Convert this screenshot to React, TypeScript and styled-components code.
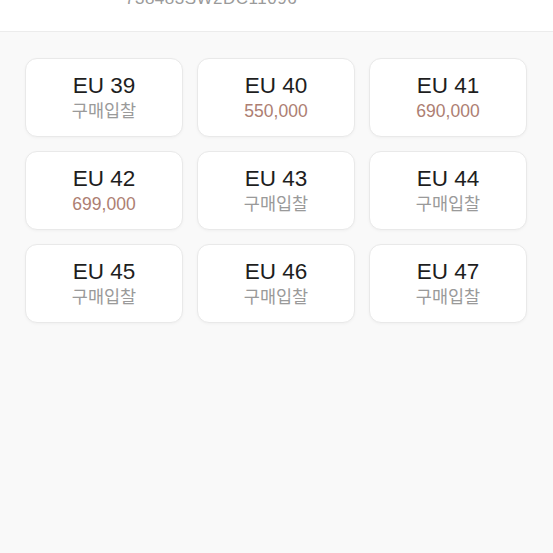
import styled, { createGlobalStyle } from "styled-components";

const GlobalStyle = createGlobalStyle`
  html, body {
    margin: 0;
    padding: 0;
    background: #f9f9f9;
    font-family: "Liberation Sans", "Noto Sans CJK KR", sans-serif;
  }
`;

const Page = styled.div`
  width: 553px;
  min-height: 553px;
  background: #f9f9f9;
`;

const Header = styled.div`
  height: 31px;
  background: #ffffff;
  border-bottom: 1px solid #ececec;
  overflow: hidden;
  padding-left: 125px;
`;

const StyleCode = styled.div`
  margin-top: -11px;
  font-size: 17px;
  line-height: 20px;
  color: #9a9a9a;
  letter-spacing: 0.5px;
`;

const Grid = styled.div`
  display: grid;
  grid-template-columns: repeat(3, 158px);
  gap: 14px;
  padding: 26px 26px 0 25px;
`;

const Card = styled.div`
  height: 77px;
  background: #ffffff;
  border: 1px solid #e9e9e9;
  border-radius: 12px;
  box-shadow: 0 1px 3px rgba(0, 0, 0, 0.04);
  display: flex;
  flex-direction: column;
  align-items: center;
  justify-content: center;
  gap: 3px;
`;

const Size = styled.div`
  font-size: 22.5px;
  line-height: 25px;
  color: #1e1e1e;
`;

const Sub = styled.div<{ $price?: boolean }>`
  font-size: 17.5px;
  line-height: 21px;
  color: ${({ $price }) => ($price ? "#ad7e72" : "#9a9a9a")};
`;

const sizes: { size: string; price?: string }[] = [
  { size: "EU 39" },
  { size: "EU 40", price: "550,000" },
  { size: "EU 41", price: "690,000" },
  { size: "EU 42", price: "699,000" },
  { size: "EU 43" },
  { size: "EU 44" },
  { size: "EU 45" },
  { size: "EU 46" },
  { size: "EU 47" },
];

export default function App() {
  return (
    <Page>
      <GlobalStyle />
      <Header>
        <StyleCode>738483SW2DC11096</StyleCode>
      </Header>
      <Grid>
        {sizes.map((s) => (
          <Card key={s.size}>
            <Size>{s.size}</Size>
            <Sub $price={!!s.price}>{s.price ?? "구매입찰"}</Sub>
          </Card>
        ))}
      </Grid>
    </Page>
  );
}
